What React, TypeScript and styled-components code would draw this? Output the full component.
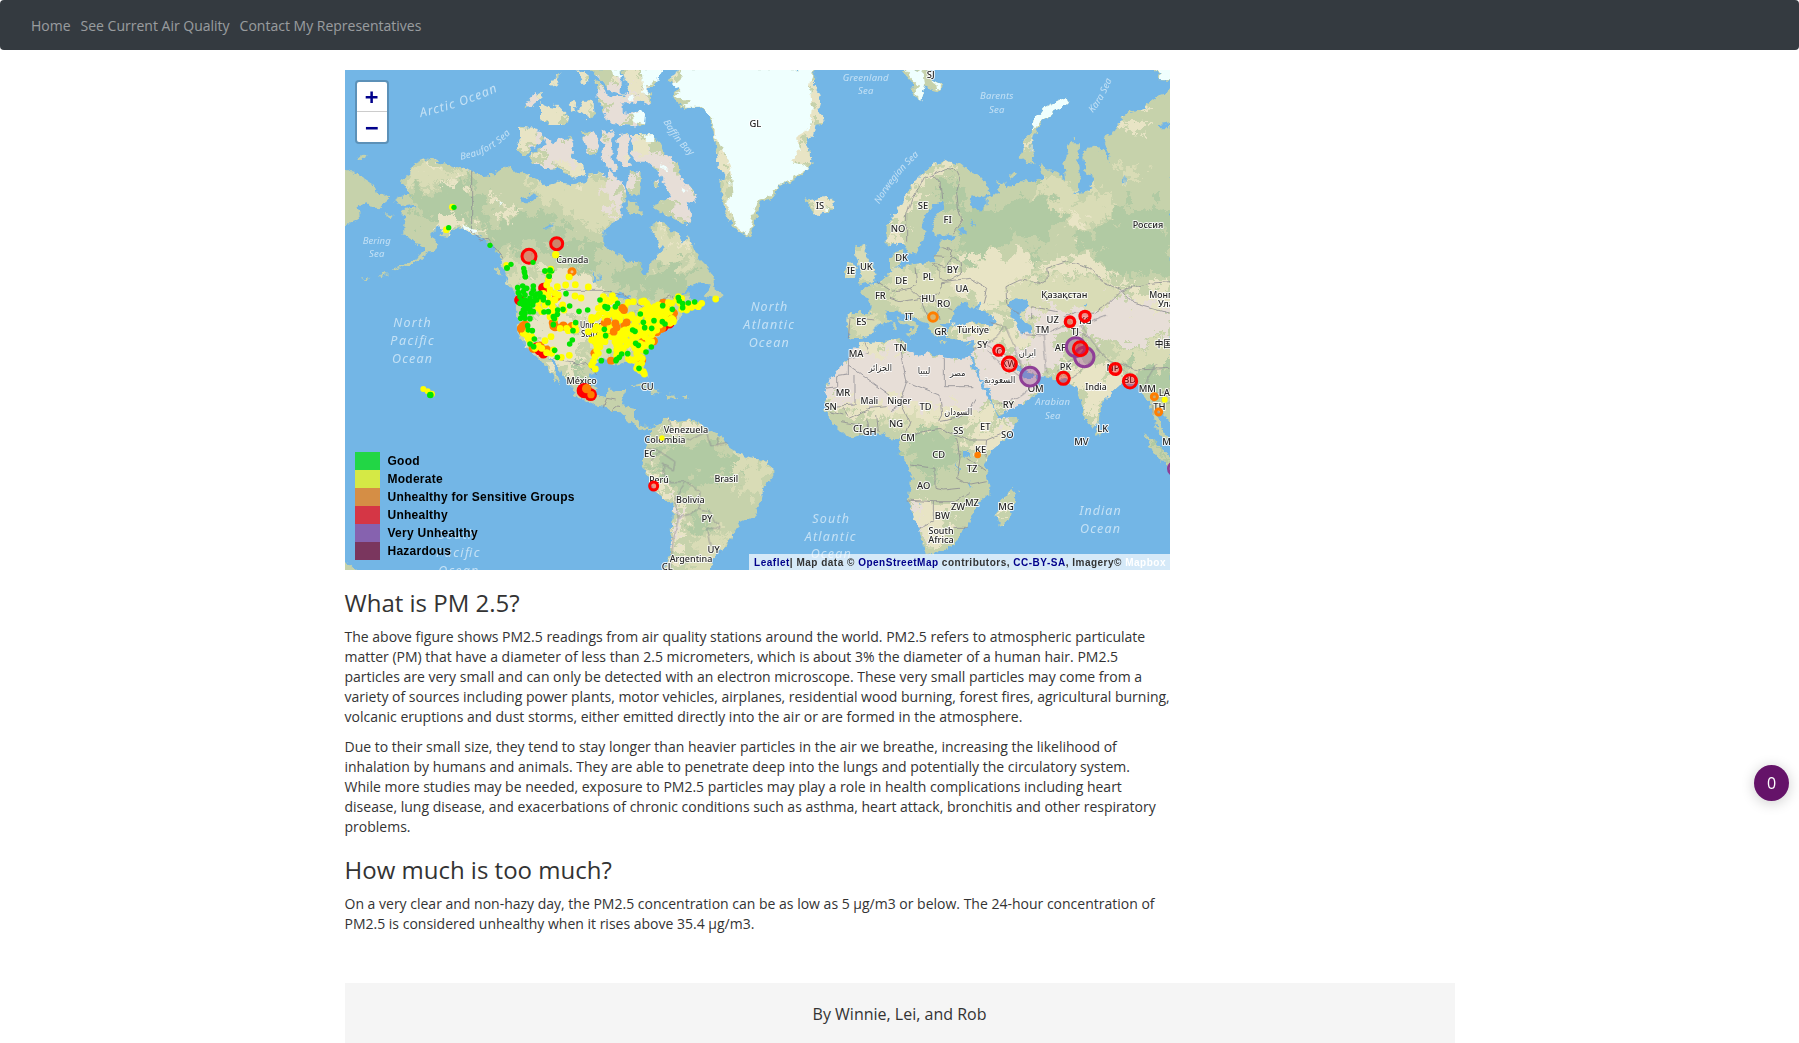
import React from "react";
import styled, { createGlobalStyle } from "styled-components";

const GlobalStyle = createGlobalStyle`
  * { box-sizing: border-box; }
  html, body { margin: 0; background: #fff; overflow: hidden; }
  body {
    font-family: "Open Sans", sans-serif;
    font-size: 14px;
    line-height: 20px;
    color: #333;
  }
`;

const Page = styled.div`
  height: 1043px;
  overflow: hidden;
  display: flex;
  flex-direction: column;
`;

const NavBar = styled.nav`
  flex: none;
  display: flex;
  align-items: center;
  gap: 10px;
  height: 50px;
  padding: 1px 31px 0;
  border-radius: 4px;
  background: #343a40;
`;

const NavLink = styled.a`
  color: rgba(255, 255, 255, 0.5);
  text-decoration: none;
`;

const Container = styled.div`
  width: 1110px;
  margin: 20px 0 0 344.5px;
`;

const Column = styled.main`
  width: 825.5px;
`;

const MapFrame = styled.section`
  position: relative;
  height: 500px;
  overflow: hidden;
  font-family: "Liberation Sans", Arial, sans-serif;
`;

const MapSvg = styled.svg`
  display: block;
  width: 825px;
  height: 500px;
`;

const ZoomControl = styled.div`
  position: absolute;
  left: 10px;
  top: 10px;
  width: 34px;
  border: 2px solid rgba(0, 0, 0, 0.2);
  border-radius: 4px;
  background: #fff;
  background-clip: padding-box;
`;

const ZoomButton = styled.button<{ $divided?: boolean }>`
  display: block;
  width: 30px;
  height: 30px;
  padding: 0;
  border: 0;
  border-bottom: ${(p) => (p.$divided ? "1px solid #ccc" : "0")};
  background: transparent;
  color: #00008b;
  font: bold 22px/29px "DejaVu Sans Mono", monospace;
`;

const Legend = styled.div`
  position: absolute;
  left: 10px;
  bottom: 10px;
  color: #000;
  font-size: 12px;
  font-weight: bold;
  letter-spacing: 0.26px;
  line-height: 18px;
`;

const LegendRow = styled.div`
  display: flex;
  gap: 8px;
  height: 18px;
`;

const Swatch = styled.i<{ $color: string }>`
  width: 25px;
  height: 18px;
  opacity: 0.7;
  background: ${(p) => p.$color};
`;

const Attribution = styled.div`
  position: absolute;
  right: 0;
  bottom: 0;
  height: 16px;
  padding: 1px 4px 0 5px;
  background: rgba(255, 255, 255, 0.7);
  color: #333;
  font-size: 10px;
  font-weight: bold;
  letter-spacing: 0.5px;
  line-height: 16px;
  white-space: pre;
`;

const CreditLink = styled.span<{ $color?: string }>`
  color: ${(p) => p.$color || "#00008b"};
`;

const Heading = styled.h3`
  margin: 20px 0 10.4px;
  font-size: 24px;
  font-weight: 400;
  line-height: 26.4px;
`;

const Paragraph = styled.p`
  margin: 0 0 10px;
`;

const Footer = styled.footer`
  height: 70px;
  margin-top: 49.4px;
  padding-top: 21px;
  background: #f5f5f5;
  font-size: 16px;
  text-align: center;
`;

const Counter = styled.div`
  position: fixed;
  right: 10px;
  top: 765px;
  width: 35px;
  height: 36px;
  border-radius: 50%;
  background: #651369;
  box-shadow: 0 2px 14px rgba(0, 0, 0, 0.2);
  color: #fff;
  font-size: 16px;
  line-height: 36px;
  text-align: center;
`;

const CountryText = styled.text`
  font-family: "Noto Sans", "DejaVu Sans", "Noto Sans CJK SC", sans-serif;
  font-weight: 500;
  fill: #262626;
  stroke: rgba(255, 255, 255, 0.85);
  stroke-width: 2px;
  stroke-linejoin: round;
  paint-order: stroke;
  text-anchor: middle;
`;

const SeaText = styled.text`
  font-family: "Noto Sans", sans-serif;
  font-style: italic;
  fill: #c4e1f5;
  text-anchor: middle;
`;

/* The map is drawn in six sheets (three across, two down), three units to a pixel. */
type Sheet = "A" | "B" | "C" | "D" | "E" | "F" | "U";
const ORIGIN: Record<Sheet, [number, number]> = {
  A: [340, 65],
  B: [610, 65],
  C: [890, 65],
  D: [340, 315],
  E: [610, 315],
  F: [890, 315],
  U: [500, 270],
};
const place = (s: Sheet) => `translate(${ORIGIN[s][0]} ${ORIGIN[s][1]}) scale(0.33333)`;
const at = (s: Sheet, x: number, y: number): [number, number] => [ORIGIN[s][0] + x / 3, ORIGIN[s][1] + y / 3];

type Shape = [Sheet, string];

const LAND: Shape[] = [
  ["A", "0,310 40,320 70,338 100,358 110,385 150,398 135,410 118,430 95,425 80,412 60,418 58,440 60,462 30,475 0,485"],
  ["A", "52,278 65,268 83,275 78,285 55,284"],
  ["A", "133,447 155,452 150,460"],
  ["A", "262,280 290,290 330,300 395,318 430,334 455,330 490,310 512,300 520,320 545,318 570,335 600,345 620,362 650,352 690,358 740,352 750,325 775,322 800,335 845,345 845,460 815,475 790,500 790,530 800,545 815,565 845,572 845,775 535,775 530,720 528,690 525,670 505,650 495,625 485,600 492,580 470,560 460,545 440,530 430,520 410,512 395,508 370,490 350,485 335,500 318,515 300,512 310,490 300,480 270,510 285,530 298,545 250,575 215,600 180,610 160,618 158,614 200,596 240,570 265,545 230,535 215,520 190,505 190,480 200,465 185,450 185,435 230,430 215,418 190,422 165,408 185,395 215,392 210,380 180,345 215,325 210,305 235,290"],
  ["A", "60,638 80,636 95,640 75,642"],
  ["A", "110,632 135,626 145,630 125,636"],
  ["A", "462,605 475,615 485,632 470,625"],
  ["A", "495,640 525,665 525,675 505,660"],
  ["A", "540,185 585,188 610,215 600,240 575,250 555,278 528,255 540,220"],
  ["A", "610,215 640,235 655,215 670,225 690,215 700,240 695,270 725,300 735,330 700,345 680,325 650,310 620,312 580,295 565,275 590,255 620,245"],
  ["A", "553,130 575,95 605,80 605,100 575,125"],
  ["A", "600,115 625,125 650,130 640,110 680,150 690,165 670,180 625,180 600,160"],
  ["A", "632,65 660,60 650,40 665,25 650,30 635,50"],
  ["A", "685,125 700,105 710,140"],
  ["A", "710,20 740,15 745,50 730,60"],
  ["A", "730,110 760,110 765,150 745,160 715,140"],
  ["A", "765,45 790,60 800,90 845,100 845,175 800,170 790,140 775,110"],
  ["A", "750,10 845,10 845,90 810,80 790,50"],
  ["A", "725,200 760,200 775,225 765,270 740,260 735,230"],
  ["A", "785,200 830,195 815,230 815,280 835,310 810,315 785,280 790,240"],
  ["B", "0,318 15,330 25,350 45,365 50,395 40,410 20,425 10,450 0,465"],
  ["B", "0,560 30,570 60,590 90,592 100,635 115,620 115,600 130,590 145,570 160,555 145,530 125,505 125,475 165,475 180,495 200,505 220,535 235,510 250,545 265,580 290,605 315,640 300,655 270,655 230,670 205,700 235,680 235,705 275,710 250,730 220,740 200,775 0,775"],
  ["B", "300,650 315,645 310,665 335,685 338,700 310,698 285,692 295,670"],
  ["B", "0,10 25,10 20,40 0,45"],
  ["B", "35,10 155,10 140,50 115,75 125,95 115,120 90,110 60,115 25,115 20,100 55,80 45,50"],
  ["B", "0,110 20,110 30,140 65,145 80,140 105,145 105,180 60,182 10,178 0,170"],
  ["B", "30,210 60,205 50,240 55,270 60,300 35,300 20,270 25,230"],
  ["B", "65,210 125,210 150,235 160,260 205,300 210,335 245,375 262,390 250,415 230,410 240,450 235,480 215,475 170,450 125,425 150,410 185,395 165,360 145,320 110,290 80,290 65,270 70,240 60,225"],
  ["B", "60,320 95,325 90,360 85,390 65,395 50,370"],
  ["B", "55,410 80,405 85,430 100,445 70,450 50,440"],
  ["B", "130,350 145,345 150,365 135,375"],
  ["B", "170,45 220,10 613,10 612,60 632,90 625,140 640,160 620,185 612,215 590,215 605,295 595,310 555,345 515,358 485,400 450,410 435,470 420,517 380,497 350,450 330,380 332,345 350,330 322,310 325,280 315,230 300,150 270,125 215,130 185,90 205,65"],
  ["B", "583,395 600,405 615,402 650,392 672,410 665,435 630,450 605,440 600,420 585,410"],
  ["B", "735,545 765,540 770,580 790,610 800,625 790,655 745,660 755,640 745,600 735,570"],
  ["B", "705,610 720,590 738,600 735,635 705,643"],
  ["B", "850,620 810,650 780,660 750,685 775,700 785,725 780,745 715,745 712,775 850,775"],
  ["C", "-10,480 10,455 30,420 55,375 75,345 100,320 130,300 165,285 210,300 235,318 265,330 295,365 298,390 265,400 245,390 240,420 270,440 290,420 290,400 330,385 325,350 345,350 350,370 375,360 405,345 430,350 460,340 450,300 475,315 500,320 525,345 520,290 540,235 568,235 562,290 570,330 565,380 545,388 580,385 612,360 610,335 590,330 580,280 590,250 610,240 645,260 660,290 655,260 638,215 670,205 690,165 720,140 760,130 800,100 845,70 845,775 -10,775 -10,630 10,610 40,605 75,600 130,590 135,565 155,555 150,530 190,525 200,512 185,508 135,512 130,480 140,450 165,420 155,408 138,410 100,460 95,485 110,500 95,535 75,570 55,565 45,540 20,530 -10,545"],
  ["C", "0,580 20,560 40,555 35,600 0,615"],
  ["C", "38,20 60,10 120,10 125,45 155,60 150,80 130,75 105,60 90,110 70,85 65,50"],
  ["C", "425,205 435,160 460,130 500,110 530,95 535,115 490,140 450,175 430,215 425,240 425,270 437,295 410,290 390,275 398,255 400,225"],
  ["C", "775,10 845,10 845,48 805,45 810,25"],
  ["C", "360,325 375,328 365,342"],
  ["C", "548,215 558,220 550,228"],
  ["D", "530,-5 845,-5 845,142 800,130 762,140 752,158 770,172 747,182 765,220 775,245 800,250 803,225 845,222 845,292 815,290 790,275 765,270 730,255 705,240 700,220 675,195 660,165 640,130 625,130 640,150 655,185 663,208 645,195 625,165 605,140 575,110 550,80 535,50"],
  ["D", "0,730 25,745 48,765 45,775 0,775"],
  ["E", "0,-5 200,-5 200,10 180,35 150,60 120,95 100,125 100,160 110,185 85,180 75,150 50,140 30,150 0,145"],
  ["E", "0,240 20,222 47,222 40,250 35,270 75,280 75,310 100,335 130,335 150,320 175,305 185,320 220,315 265,320 290,345 340,365 355,395 375,410 420,430 460,435 490,455 490,485 460,520 455,560 430,605 390,625 375,650 350,695 325,712 308,728 300,775 160,775 180,720 185,650 190,570 160,550 130,520 110,480 95,450 100,430 110,410 115,380 125,348 112,338 95,345 65,325 30,290 0,280"],
  ["E", "65,212 95,205 130,220 155,232 130,235 100,215"],
  ["E", "165,240 195,238 205,248 170,252"],
  ["E", "217,246 230,246 228,251 217,251"],
  ["E", "850,75 780,80 745,85 715,130 690,155 660,190 645,220 650,260 645,290 665,320 700,355 725,370 760,355 800,350 850,372"],
  ["E", "713,-5 817,-5 800,30 785,60 745,72 715,65"],
  ["F", "-10,80 40,70 50,85 50,105 90,125 110,112 130,120 200,130 240,125 250,160 270,200 290,240 315,285 325,310 380,305 385,320 350,370 300,410 285,450 295,500 295,540 255,575 245,600 230,640 210,660 195,685 150,715 110,720 100,680 85,640 70,600 50,555 60,520 65,480 50,445 30,420 25,390 30,370 -10,367"],
  ["F", "370,515 380,535 350,625 330,633 320,600 330,560"],
  ["F", "120,-10 175,-20 190,-10 845,-10 845,330 838,320 820,290 800,290 812,335 838,375 825,378 800,340 790,300 770,250 750,230 740,205 700,200 680,220 635,260 625,325 605,338 590,315 570,250 560,215 545,210 530,190 505,195 480,190 430,180 395,160 370,138 385,165 395,190 420,190 435,178 440,200 458,215 440,240 400,265 325,300 316,285 300,235 270,190 250,130 245,120 255,90 250,75 210,78 190,75 168,60 168,38 200,25 165,15 150,20 160,45 150,62 135,65 118,40 100,10"],
  ["F", "10,-10 50,-10 60,10 92,25 80,35 68,60 60,58 68,35 35,15"],
  ["F", "40,55 64,55 60,66"],
  ["F", "10,20 20,20 20,45 10,42"],
  ["F", "148,80 172,82 150,86"],
  ["F", "230,88 245,82 238,93"],
  ["F", "622,335 635,350 628,365 618,358"],
  ["F", "762,360 800,385 845,430 845,470 800,420"],
];

const GREEN = "#b1caa3";
const PALE = "#d9dcb6";
const CREAM = "#e8e4c5";
const DESERT = "#e7ded7";
const ICE = "#effffe";

const PATCHES: [Sheet, string, string][] = [
  ["A", GREEN, "215,400 290,370 380,350 440,380 430,470 350,450 250,470 215,440"],
  ["A", GREEN, "420,470 500,480 560,430 620,450 700,520 760,520 780,600 700,620 640,560 560,540 480,560"],
  ["A", PALE, "180,340 260,280 400,320 380,340 280,350 230,380"],
  ["A", CREAM, "265,285 320,300 290,308 250,300"],
  ["A", CREAM, "300,370 370,330 395,335 340,370"],
  ["A", CREAM, "290,470 330,440 420,490 440,520 350,490 310,520"],
  ["A", CREAM, "450,400 510,420 530,480 500,470 470,430"],
  ["A", PALE, "560,350 850,330 850,470 790,500 740,480 660,430 600,400"],
  ["A", DESERT, "790,320 850,330 850,440 810,420 780,370"],
  ["A", CREAM, "600,620 680,610 760,640 800,700 830,765 600,775 640,700"],
  ["A", PALE, "500,560 560,600 620,680 540,700"],
  ["A", DESERT, "560,200 740,220 740,340 600,300 590,230"],
  ["A", CREAM, "525,180 590,190 560,280 525,270"],
  ["A", CREAM, "640,290 740,290 740,350 680,340"],
  ["A", DESERT, "550,70 610,70 610,130 550,130"],
  ["A", CREAM, "610,20 760,20 760,180 610,180"],
  ["A", DESERT, "770,40 850,40 850,180 800,170"],
  ["A", DESERT, "720,190 850,190 850,320 780,300 740,250"],
  ["B", DESERT, "0,60 110,60 110,180 0,180"],
  ["B", CREAM, "30,10 110,10 100,110 50,100"],
  ["B", DESERT, "0,190 60,190 70,280 120,250 200,290 270,390 240,480 170,450 180,390 100,300 0,460"],
  ["B", CREAM, "60,205 120,205 110,290 70,290"],
  ["B", PALE, "120,470 250,510 270,580 180,600 120,560"],
  ["B", CREAM, "125,480 160,480 150,530 230,520 250,560 200,540"],
  ["B", GREEN, "20,590 90,600 110,660 180,590 250,640 220,680 100,700 20,660"],
  ["B", CREAM, "160,10 230,10 200,60 170,70"],
  ["B", CREAM, "580,60 645,60 645,180 600,300 540,300 540,220 600,200"],
  ["B", PALE, "325,340 370,340 370,460 400,500 350,470"],
  ["B", CREAM, "310,200 340,200 370,330 325,330"],
  ["B", CREAM, "580,390 680,390 670,450 600,440"],
  ["B", PALE, "700,540 810,540 810,660 700,650"],
  ["C", CREAM, "60,370 130,290 210,290 150,330 90,370 40,480 40,520 0,530 0,460"],
  ["C", GREEN, "200,400 240,400 300,440 450,380 510,440 480,520 360,520 230,590 200,560 210,480"],
  ["C", GREEN, "560,510 640,480 700,420 850,430 850,640 760,620 680,640 620,560 560,540"],
  ["C", GREEN, "140,360 200,330 220,380 200,460 170,400"],
  ["C", PALE, "420,350 520,350 560,400 620,360 680,420 640,470 530,500 500,420"],
  ["C", CREAM, "530,430 590,450 580,500 530,480"],
  ["C", CREAM, "690,180 740,150 790,170 740,210"],
  ["C", PALE, "680,310 760,320 740,350 690,350"],
  ["C", CREAM, "210,600 300,560 430,570 420,650 310,740 250,700 160,680 160,650"],
  ["C", CREAM, "460,600 560,570 640,600 690,670 600,620 480,630"],
  ["C", PALE, "340,660 480,630 600,640 700,680 620,760 360,760"],
  ["C", PALE, "0,620 180,600 200,700 60,740 0,720"],
  ["C", GREEN, "440,540 455,560 440,630 430,600"],
  ["C", DESERT, "420,730 540,720 600,750 680,700 850,710 850,780 420,780"],
  ["C", CREAM, "700,660 850,660 850,720 740,720"],
  ["C", CREAM, "395,210 430,190 425,250 400,260"],
  ["D", CREAM, "560,0 700,0 720,90 700,190 620,130 580,80"],
  ["D", GREEN, "690,140 730,150 740,200 710,200"],
  ["D", PALE, "720,10 850,0 850,120 760,140"],
  ["E", GREEN, "140,400 240,380 330,400 420,440 380,480 260,500 240,530 170,500 130,440"],
  ["E", GREEN, "0,0 180,0 120,70 50,90"],
  ["E", PALE, "380,420 490,440 450,560 380,540"],
  ["E", CREAM, "150,310 280,320 260,350 180,345"],
  ["E", CREAM, "100,440 130,460 200,550 230,620 215,700 200,770 180,760 190,570 130,510"],
  ["E", DESERT, "190,560 215,570 210,650 200,700 188,700"],
  ["E", GREEN, "240,600 300,600 290,640 250,640"],
  ["E", PALE, "260,650 360,650 330,720 300,770 240,770"],
  ["E", DESERT, "640,140 850,90 850,265 650,265"],
  ["E", CREAM, "720,90 850,75 850,110 760,130"],
  ["E", CREAM, "650,265 850,260 850,300 680,295"],
  ["E", PALE, "713,0 815,0 790,60 720,60"],
  ["F", DESERT, "-10,85 240,120 300,250 250,270 150,290 -10,265"],
  ["F", CREAM, "-10,265 150,280 270,270 320,310 300,340 190,310 -10,300"],
  ["F", GREEN, "40,370 90,330 160,350 200,390 190,450 140,490 60,440"],
  ["F", PALE, "-10,300 180,310 160,345 60,340 -10,340"],
  ["F", CREAM, "220,370 380,310 330,400 280,440 250,400"],
  ["F", DESERT, "330,308 385,305 370,340 340,350"],
  ["F", CREAM, "60,555 130,560 190,610 160,680 110,700"],
  ["F", DESERT, "50,560 75,570 105,690 90,670"],
  ["F", CREAM, "320,550 345,540 330,620 320,620"],
  ["F", DESERT, "250,70 330,90 380,170 460,215 400,265 330,290 290,240"],
  ["F", CREAM, "180,10 420,40 400,90 330,80 200,70"],
  ["F", DESERT, "390,50 500,40 520,170 440,180 390,140"],
  ["F", DESERT, "430,-10 600,-10 560,40 450,50"],
  ["F", DESERT, "600,20 850,0 850,60 740,90 650,90 600,80"],
  ["F", PALE, "640,110 740,100 850,70 850,150 740,160"],
  ["F", CREAM, "540,130 680,170 690,210 630,270 620,320 590,300 570,220 540,200"],
  ["F", GREEN, "700,160 850,150 850,260 770,240 740,190"],
  ["F", GREEN, "780,370 850,420 850,460 800,410"],
];

const ICE_SHAPES: Shape[] = [
  ["B", "222,10 611,10 600,60 605,130 600,190 555,215 570,255 545,290 598,308 550,338 515,355 480,392 445,405 428,460 415,512 385,492 360,440 345,405 368,395 360,300 340,255 318,215 305,160 275,125 215,125 240,110 190,88 215,80 185,60 205,45"],
  ["B", "95,10 155,10 145,45 110,60 120,90 100,85"],
  ["B", "65,150 95,138 108,150 105,178 75,172"],
  ["B", "50,95 75,95 70,108 52,106"],
  ["B", "100,212 125,210 140,230 115,228"],
  ["B", "150,295 175,310 170,318 155,310"],
  ["B", "212,365 235,378 225,382"],
  ["B", "640,425 655,425 650,437 640,436"],
  ["C", "45,15 75,12 100,20 105,60 90,110 75,85 90,65 65,40"],
  ["C", "110,15 130,20 125,45 150,60 148,75 132,60"],
  ["C", "428,200 435,160 460,130 500,110 530,95 535,115 490,140 450,170"],
  ["C", "780,10 845,10 845,45 810,45 812,22"],
  ["A", "820,10 845,10 845,40 822,35"],
  ["A", "365,475 385,485 415,495 412,505 380,495"],
  ["A", "470,408 485,415 480,422"],
];

const WATER: Shape[] = [
  ["A", "540,400 560,395 575,385 592,395 570,415 545,415"],
  ["A", "605,492 625,480 642,470 630,490"],
  ["A", "755,612 765,630 775,655 762,655"],
  ["A", "775,620 782,640 776,650"],
  ["B", "-5,685 30,683 60,697 50,703 10,695"],
  ["C", "183,775 193,742 212,712 232,722 255,725 278,708 265,730 300,750 325,772 300,782 250,768 205,782"],
  ["C", "355,720 375,700 410,705 415,730 390,740 400,765 420,780 425,805 395,808 380,780 365,755"],
  ["C", "210,490 225,490 228,508 212,510"],
  ["C", "245,465 255,480 250,490"],
  ["C", "575,720 592,710 585,725"],
  ["C", "-10,738 25,740 60,755 110,775 95,790 60,765 20,760 35,775 10,775 -10,760"],
  ["F", "222,408 238,408 236,425 222,425"],
  ["F", "200,440 207,460 204,475"],
  ["F", "238,490 244,515 239,525"],
  ["F", "88,567 95,570 88,572"],
  ["C", "805,180 840,175 840,190 815,190"],
  ["C", "695,350 705,330 702,360"],
];

const BORDERS: [Sheet, string][] = [
  ["A", "M395,318V505L420,525L445,520L470,555L490,580"],
  ["A", "M610,676H790L840,690"],
  ["B", "M0,688L40,690L80,715L110,735M150,705L175,690L200,712"],
  ["C", "M50,530V450L65,400L85,370L100,340L130,330L170,310L195,315L210,345L200,380L205,430L215,465L190,505M130,330L150,350L155,405"],
  ["C", "M155,545L185,555V575L130,572M130,595L165,605L185,580L210,590L215,625L180,645L150,640V620L130,600M75,605L80,660L60,670L85,695L150,690L155,650M0,680L60,670M155,650L240,640L290,670L280,715M85,695L130,690L140,720L190,735M30,710L90,700L110,750M0,700L30,710M145,735L150,765"],
  ["C", "M385,750L350,715L348,665L390,645L450,655L475,640L470,610L530,590L600,610L640,650L695,675L780,655L840,650M695,675L730,715L838,745M695,675L650,720L610,745L560,740L520,760M425,765V725L500,740"],
  ["B", "M800,650L840,675M720,755L790,765"],
  ["D", "M640,130L690,140L720,150L740,145L770,180M790,275L800,250L830,255M815,290L840,270"],
  ["E", "M175,310L185,350L240,375L290,350M290,350L300,395L350,385M325,365L318,395M115,400L150,410L195,440L190,465L160,450L165,500L230,500L205,540L195,560L205,610L240,600L265,580L300,590L330,640L290,640L300,690M205,610L190,680L180,765M230,500L270,530L265,580M300,690L330,715M120,440L150,410"],
  ["E", "M715,70L720,10M715,150L840,240M735,180V270L650,275M645,220L680,215V185L715,180V130L775,115L765,85M700,280L720,310L780,280L830,275M690,320L750,330V360M770,310L780,355M800,300L805,350M660,290L700,300"],
  ["F", "M35,75L30,110L50,200L150,240M163,130V215H250M150,240L155,300L145,320L200,310L240,285M50,200L30,260L60,320L45,360M45,360L150,340L230,375L290,375L350,350M240,285L260,250M200,370L210,430L200,490L240,510L290,500M60,450L135,460V520L160,525L210,520M50,555L130,560V620L90,640M130,560L190,560L240,530M190,640L230,640M290,375L285,430M230,430L290,470M0,290L50,260"],
  ["F", "M250,100L290,85L330,60L340,30L300,20M290,85L360,130M290,110L340,150L390,190M320,270L380,250L420,220M345,30L380,110L395,160M460,60L530,30L600,70L630,110L560,180L540,190M470,175L460,60M500,170L560,120L580,60M600,70L570,30L650,0M620,100L660,140L740,165L838,160M670,145L700,170M750,225L770,200L800,150M790,300L785,240L838,220M395,55L460,60"],
];

/* colours of the air quality index */
const YELLOW = "#ffff00";
const LIME = "#00e400";
const ORANGE = "#ff7e00";
const RED = "#ff0000";
const PURPLE = "#8f3f97";

const pairs = (s: string): [number, number][] => s.trim().split(/\s+/).map((p) => p.split(",").map(Number) as [number, number]);

const US_RED = "130,54 58,90 118,240 130,250 110,232 514,145 508,160 490,170";
const US_ORANGE = "65,175 75,165 170,80 160,158 165,170 190,168 215,170 140,240 315,160 490,100 495,110 520,130 470,185 485,175 430,215 460,213 425,270 285,250 330,190 70,185 100,235 120,228 375,165 500,140";
const US_ORANGE_TOP = "367,114 372,120 346,160 341,185 350,172 380,157 333,272 322,155 63,176 68,168 160,168";
const US_YELLOW = `147,12 145,30 140,45 150,60 172,50 197,45 226,44 265,51 207,20 130,70 145,75 165,70 150,90 155,105 165,90 175,75 160,115
 170,130 155,130 150,140 165,145 125,125 135,105 115,115 192,120 188,105 225,78 243,84 115,95 200,175 205,182 180,175 225,165 228,180
 75,180 80,195 70,190 85,205 95,200 90,215 105,235 115,228 125,235 140,248 135,212 153,200 184,262 160,240 208,256 155,250
 305,102 310,80 320,90 337,77 330,95 345,90 320,110 310,125 297,135 290,142 275,142 325,135 335,130 345,140 355,130 360,140 370,130 380,140 350,150
 360,150 385,145 395,135 400,145 408,150 385,97 400,95 425,95 432,93 440,100 445,110 435,120 430,130 420,140 415,150 405,160
 265,185 290,170 285,180 300,175 305,185 300,195 290,205 285,215 275,210 300,205 310,210 290,225 300,230 290,240 295,250 285,260 280,275 286,297 275,285 320,200
 315,215 325,180 330,165 355,180 365,185 375,180 390,170 400,175 410,170 420,175 385,190 395,195 360,195 350,205 365,205 375,210 360,215 350,225
 360,230 365,245 370,235 380,225 390,215 400,210 410,200 420,195 430,190 440,185 450,180 425,185 435,200 445,210 455,195 460,185 470,180 465,170 450,165
 440,155 430,165 445,145 455,150 465,145 475,150 485,140 495,145 505,150 515,145 520,150 490,155 480,165 470,160 500,130 510,125 480,130 470,135 460,130
 455,115 465,110 475,105 480,115 475,120 490,120 500,115 515,100 505,98 450,120 440,135 450,135 425,125 420,220 430,225 425,235 415,240 405,235 410,250 400,225
 385,265 390,270 400,270 410,265 420,260 427,265 425,280 415,285 420,300 430,305 433,312 410,295 350,255 350,240 445,225 455,215 430,240
 535,80 530,90 545,85 540,100 560,110 575,112 545,118 590,107 605,100 595,110 647,87 560,120 575,105 520,155 510,160 440,175 375,195 345,215 340,120 355,120
 375,110 295,115 275,150 335,200 300,215 315,145`;
const US_GREEN = `73,5 76,20 135,3 147,18 155,3 53,53 68,48 75,55 100,48 55,68 70,65 60,80 75,75 95,70 100,60 65,92 75,90 90,85 105,80 110,72 120,70
 100,95 110,90 120,80 130,82 130,90 80,100 70,105 85,105 98,105 70,120 80,115 90,118 100,125 65,130 75,130 90,125 62,145 75,145 72,138 90,146 144,98
 132,126 145,125 173,120 172,133 189,118 160,140 163,146 160,164 198,71 209,108 237,124 263,120 227,158 219,182 83,167 85,180 97,182 103,207 90,222
 101,230 217,210 209,222 164,241 172,262 300,90 315,110 322,115 323,112 353,100 346,110 421,132 313,178 317,197 398,180 405,184 430,157 434,173 462,152
 487,155 495,162 455,175 488,107 535,83 538,93 548,101 548,113 565,99 584,96 517,118 407,220 415,226 454,231 438,246 327,243 304,272 348,272 358,262
 365,252 383,251 417,295 350,268 80,55 60,100 75,110 85,95`;

const OTHER_DOTS: [Sheet, number, number, number, string][] = [
  ["A", 337, 426, 10, YELLOW], ["A", 342, 427, 8, LIME],
  ["A", 319, 494, 10, YELLOW], ["A", 326, 488, 8, LIME], ["A", 450, 541, 8, LIME],
  ["A", 647, 569, 11, YELLOW], ["A", 579, 592, 8, LIME],
  ["A", 499, 600, 9, YELLOW], ["A", 501, 609, 9, LIME], ["A", 513, 598, 8, LIME], ["A", 551, 610, 8, LIME],
  ["A", 554, 624, 8, LIME], ["A", 556, 635, 8, LIME], ["A", 632, 612, 10, YELLOW], ["A", 615, 618, 8, LIME],
  ["A", 630, 616, 9, LIME], ["A", 628, 634, 8, LIME], ["A", 688, 636, 10, YELLOW],
  ["D", 250, 222, 9, YELLOW], ["D", 263, 229, 9, YELLOW], ["D", 275, 237, 10, YELLOW], ["D", 271, 240, 10, LIME],
  ["E", 156, 369, 8, YELLOW],
  ["F", 263, 420, 10, ORANGE], ["F", 824, 254, 9, YELLOW],
  ["D", 733, 227, 23, RED], ["D", 752, 239, 19, RED], ["D", 740, 221, 14, ORANGE], ["D", 753, 239, 11, ORANGE],
];

/* sheet, x, y, radius, ring width, colour */
const RINGS: [Sheet, number, number, number, number, string][] = [
  ["A", 567, 574, 21, 9, RED],
  ["A", 650, 536, 18, 9, RED],
  ["A", 696, 620, 9, 9, ORANGE],
  ["C", 129, 756, 13, 9, ORANGE],
  ["F", 540, 20, 14, 10, RED],
  ["F", 585, 4, 15, 10, RED],
  ["F", 326, 106, 15, 9, RED],
  ["F", 358, 147, 21, 9, RED],
  ["F", 420, 185, 28, 9, PURPLE],
  ["F", 557, 96, 28, 9, PURPLE],
  ["F", 583, 126, 29, 9, PURPLE],
  ["F", 571, 101, 21, 9, RED],
  ["F", 520, 190, 18, 9, RED],
  ["F", 676, 162, 16, 10, RED],
  ["F", 720, 199, 20, 9, RED],
  ["F", 793, 245, 9, 9, ORANGE],
  ["F", 806, 291, 9, 9, ORANGE],
  ["F", 855, 461, 20, 8, PURPLE],
  ["E", 131, 513, 12, 9, RED],
];

/* sheet, centre x, baseline y, text, width in sheet units when the name is long */
const COUNTRIES: [Sheet, number, number, string, number?][] = [
  ["A", 697, 595, "Canada", 97],
  ["B", 436, 186, "GL"], ["B", 630, 431, "IS"], ["B", 723, 628, "IE"], ["B", 769, 614, "UK"], ["B", 811, 701, "FR"],
  ["C", 122, 38, "SJ"], ["C", 99, 432, "SE"], ["C", 173, 473, "FI"], ["C", 24, 502, "NO"], ["C", 35, 588, "DK"],
  ["C", 188, 624, "BY"], ["C", 114, 644, "PL"], ["C", 34, 657, "DE"], ["C", 216, 682, "UA"], ["C", 115, 711, "HU"],
  ["C", 161, 726, "RO"], ["C", 57, 765, "IT"], ["C", 523, 699, "Қазақстан", 138], ["C", 774, 488, "Россия", 92],
  ["C", 812, 699, "Монг", 68], ["C", 828, 726, "Ула", 48], ["F", 488, 23, "UZ"],
  ["D", 754, 38, "United", 68], ["D", 757, 65, "States", 68], ["D", 725, 207, "México", 91],
  ["E", 754, 30, "ES"], ["E", 738, 125, "MA"], ["E", 112, 225, "CU"], ["E", 228, 353, "Venezuela", 134],
  ["E", 165, 385, "Colombia", 123], ["E", 119, 427, "EC"], ["E", 147, 504, "Perú", 58], ["E", 349, 500, "Brasil", 71],
  ["E", 241, 565, "Bolivia", 86], ["E", 291, 620, "PY"], ["E", 311, 714, "UY"], ["E", 243, 741, "Argentina", 128],
  ["E", 172, 765, "CL"], ["E", 699, 244, "MR"], ["E", 778, 267, "Mali", 53], ["E", 662, 286, "SN"],
  ["E", 743, 351, "CI"], ["E", 779, 359, "GH"], ["E", 811, 168, "الجزائر", 70],
  ["F", 31, 107, "TN"], ["F", 152, 60, "GR"], ["F", 249, 54, "Türkiye", 96], ["F", 277, 99, "SY"],
  ["F", 457, 54, "TM"], ["F", 555, 59, "TJ"], ["F", 586, 28, "KG"], ["F", 511, 109, "AF"], ["F", 412, 124, "ایران", 52],
  ["F", 325, 119, "IQ"], ["F", 356, 155, "KW"], ["F", 102, 177, "ليبيا", 38], ["F", 203, 183, "مصر", 46],
  ["F", 329, 203, "السعودية", 94], ["F", 437, 231, "OM"], ["F", 527, 165, "PK"], ["F", 669, 168, "NP"],
  ["F", 719, 204, "BD"], ["F", 618, 224, "India", 64], ["F", 772, 231, "MM"], ["F", 823, 243, "LA"], ["F", 808, 285, "TH"],
  ["F", 820, 96, "中国", 52], ["F", 28, 267, "Niger", 72], ["F", 107, 284, "TD"], ["F", 355, 279, "RY"],
  ["F", 205, 299, "السودان", 84], ["F", 18, 335, "NG"], ["F", 205, 356, "SS"], ["F", 286, 344, "ET"], ["F", 352, 369, "SO"],
  ["F", 53, 377, "CM"], ["F", 638, 352, "LK"], ["F", 574, 390, "MV"], ["F", 272, 413, "KE"], ["F", 146, 428, "CD"],
  ["F", 246, 471, "TZ"], ["F", 101, 522, "AO"], ["F", 246, 574, "MZ"], ["F", 204, 584, "ZW"], ["F", 348, 586, "MG"],
  ["F", 157, 611, "BW"], ["F", 153, 656, "South", 75], ["F", 153, 684, "Africa", 76], ["F", 838, 391, "MY"],
];

/* sheet, centre x, baseline y, text, size, width */
const SEAS: [Sheet, number, number, string, number, number][] = [
  ["A", 110, 536, "Bering", 9.5, 84], ["A", 110, 577, "Sea", 9.5, 46],
  ["B", 767, 47, "Greenland", 9.5, 137], ["B", 767, 88, "Sea", 9.5, 46],
  ["C", 320, 103, "Barents", 9.5, 100], ["C", 320, 144, "Sea", 9.5, 46],
  ["D", 216, 37, "North", 12.5, 112], ["D", 216, 91, "Pacific", 12.5, 130], ["D", 216, 144, "Ocean", 12.5, 120],
  ["D", 350, 672, "South", 12.5, 110], ["D", 353, 726, "Pacific", 12.5, 130], ["D", 355, 779, "Ocean", 12.5, 120],
  ["B", 477, 738, "North", 12.5, 110], ["E", 476, 41, "Atlantic", 12.5, 152], ["E", 476, 95, "Ocean", 12.5, 120],
  ["E", 662, 623, "South", 12.5, 110], ["E", 660, 677, "Atlantic", 12.5, 152], ["E", 662, 730, "Ocean", 12.5, 120],
  ["F", 488, 271, "Arabian", 9.5, 104], ["F", 488, 312, "Sea", 9.5, 46],
  ["F", 630, 600, "Indian", 12.5, 124], ["F", 630, 653, "Ocean", 12.5, 120],
];

/* names that follow a curve: id, sheet, path, text, size, width */
const CURVED: [string, Sheet, string, string, number, number][] = [
  ["arctic", "A", "M242,156Q370,128 478,76", "Arctic Ocean", 12.5, 244],
  ["beaufort", "A", "M362,284Q455,270 516,200", "Beaufort Sea", 9.5, 172],
  ["baffin", "B", "M160,170Q195,235 244,275", "Baffin Bay", 9.5, 132],
  ["norwegian", "B", "M808,418Q860,330 930,268", "Norwegian Sea", 9.5, 190],
  ["kara", "C", "M608,144Q645,100 666,42", "Kara Sea", 9.5, 116],
];

const Dots = ({ list, r, color }: { list: string; r: number; color: string }) => (
  <g fill={color}>
    {pairs(list).map(([x, y], i) => {
      const [cx, cy] = at("U", x, y);
      return <circle key={i} cx={cx} cy={cy} r={r} />;
    })}
  </g>
);

const WorldMap = () => (
  <MapSvg viewBox="345 70 825 500" role="img" aria-label="PM2.5 readings map">
    <defs>
      <filter id="coast" filterUnits="userSpaceOnUse" x="335" y="60" width="845" height="520">
        <feTurbulence type="fractalNoise" baseFrequency="0.16" numOctaves="3" seed="4" />
        <feDisplacementMap in="SourceGraphic" scale="8" xChannelSelector="R" yChannelSelector="G" />
      </filter>
      <filter id="relief" filterUnits="userSpaceOnUse" x="335" y="60" width="845" height="520">
        <feTurbulence type="fractalNoise" baseFrequency="0.08" numOctaves="5" seed="9" />
        <feDisplacementMap in="SourceGraphic" scale="44" xChannelSelector="R" yChannelSelector="G" />
      </filter>
      <filter id="line" filterUnits="userSpaceOnUse" x="335" y="60" width="845" height="520">
        <feTurbulence type="fractalNoise" baseFrequency="0.1" numOctaves="2" seed="2" />
        <feDisplacementMap in="SourceGraphic" scale="5" xChannelSelector="R" yChannelSelector="G" />
      </filter>
      <clipPath id="land">
        {LAND.map(([s, p], i) => (
          <polygon key={i} points={p} transform={place(s)} />
        ))}
      </clipPath>
      {CURVED.map(([id, , d]) => (
        <path key={id} id={`${id}-run`} d={d} />
      ))}
    </defs>
    <rect x="345" y="70" width="825" height="500" fill="#73b6e6" />
    <g filter="url(#coast)">
      <g clipPath="url(#land)">
        <rect x="335" y="60" width="845" height="520" fill="#c6d2ab" />
        <g filter="url(#relief)">
          {PATCHES.map(([s, c, p], i) => (
            <polygon key={i} points={p} fill={c} transform={place(s)} />
          ))}
        </g>
      </g>
      {ICE_SHAPES.map(([s, p], i) => (
        <polygon key={i} points={p} fill={ICE} transform={place(s)} />
      ))}
      {WATER.map(([s, p], i) => (
        <polygon key={i} points={p} fill="#73b6e6" transform={place(s)} />
      ))}
    </g>
    <g filter="url(#line)" fill="none" stroke="#8d8c92" strokeWidth="2.8" opacity="0.85">
      {BORDERS.map(([s, d], i) => (
        <path key={i} d={d} transform={place(s)} />
      ))}
    </g>
    {SEAS.map(([s, x, y, t, size, w], i) => {
      const [px, py] = at(s, x, y);
      return (
        <SeaText key={i} x={px} y={py} fontSize={size} textLength={w / 3}>
          {t}
        </SeaText>
      );
    })}
    {CURVED.map(([id, s, , t, size, w]) => (
      <SeaText key={id} transform={place(s)} fontSize={size * 3} style={{ textAnchor: "start" }}>
        <textPath href={`#${id}-run`} textLength={w}>
          {t}
        </textPath>
      </SeaText>
    ))}
    {COUNTRIES.map(([s, x, y, t, w], i) => {
      const [px, py] = at(s, x, y);
      return (
        <CountryText key={i} x={px} y={py} fontSize={9.4} textLength={w ? w / 3 : undefined} lengthAdjust="spacingAndGlyphs">
          {t}
        </CountryText>
      );
    })}
    <Dots list={US_RED} r={5.2} color={RED} />
    <Dots list={US_ORANGE} r={4.6} color={ORANGE} />
    <Dots list={US_YELLOW} r={3.4} color={YELLOW} />
    <Dots list={US_ORANGE_TOP} r={3.9} color={ORANGE} />
    <Dots list={US_GREEN} r={2.8} color={LIME} />
    {RINGS.map(([s, x, y, r, w, c], i) => {
      const [cx, cy] = at(s, x, y);
      return <circle key={i} cx={cx} cy={cy} r={r / 3} fill={c} fillOpacity="0.35" stroke={c} strokeWidth={w / 3} />;
    })}
    {OTHER_DOTS.map(([s, x, y, r, c], i) => {
      const [cx, cy] = at(s, x, y);
      return <circle key={i} cx={cx} cy={cy} r={r / 3} fill={c} />;
    })}
  </MapSvg>
);

const LEGEND = [
  ["#00e400", "Good"],
  ["#ffff00", "Moderate"],
  ["#ff7e00", "Unhealthy for Sensitive Groups"],
  ["#ff0000", "Unhealthy"],
  ["#8f3f97", "Very Unhealthy"],
  ["#7e0023", "Hazardous"],
];

export default function App() {
  return (
    <Page>
      <GlobalStyle />
      <NavBar>
        <NavLink>Home</NavLink>
        <NavLink>See Current Air Quality</NavLink>
        <NavLink>Contact My Representatives</NavLink>
      </NavBar>
      <Container>
        <Column>
          <MapFrame>
            <WorldMap />
            <ZoomControl>
              <ZoomButton $divided>+</ZoomButton>
              <ZoomButton>−</ZoomButton>
            </ZoomControl>
            <Legend>
              {LEGEND.map(([color, name]) => (
                <LegendRow key={name}>
                  <Swatch $color={color} />
                  {name}
                </LegendRow>
              ))}
            </Legend>
            <Attribution>
              <CreditLink>Leaflet</CreditLink>| Map data © <CreditLink>OpenStreetMap</CreditLink> contributors,{" "}
              <CreditLink>CC-BY-SA</CreditLink>, Imagery© <CreditLink $color="#fff">Mapbox</CreditLink>
            </Attribution>
          </MapFrame>
          <Heading>What is PM 2.5?</Heading>
          <Paragraph>
            The above figure shows PM2.5 readings from air quality stations around the world. PM2.5 refers to atmospheric
            particulate matter (PM) that have a diameter of less than 2.5 micrometers, which is about 3% the diameter of a
            human hair. PM2.5 particles are very small and can only be detected with an electron microscope. These very
            small particles may come from a variety of sources including power plants, motor vehicles, airplanes,
            residential wood burning, forest fires, agricultural burning, volcanic eruptions and dust storms, either
            emitted directly into the air or are formed in the atmosphere.
          </Paragraph>
          <Paragraph>
            Due to their small size, they tend to stay longer than heavier particles in the air we breathe, increasing the
            likelihood of inhalation by humans and animals. They are able to penetrate deep into the lungs and potentially
            the circulatory system. While more studies may be needed, exposure to PM2.5 particles may play a role in
            health complications including heart disease, lung disease, and exacerbations of chronic conditions such as
            asthma, heart attack, bronchitis and other respiratory problems.
          </Paragraph>
          <Heading>How much is too much?</Heading>
          <Paragraph>
            On a very clear and non-hazy day, the PM2.5 concentration can be as low as 5 µg/m3 or below. The 24-hour
            concentration of PM2.5 is considered unhealthy when it rises above 35.4 µg/m3.
          </Paragraph>
        </Column>
        <Footer>By Winnie, Lei, and Rob</Footer>
      </Container>
      <Counter>0</Counter>
    </Page>
  );
}
